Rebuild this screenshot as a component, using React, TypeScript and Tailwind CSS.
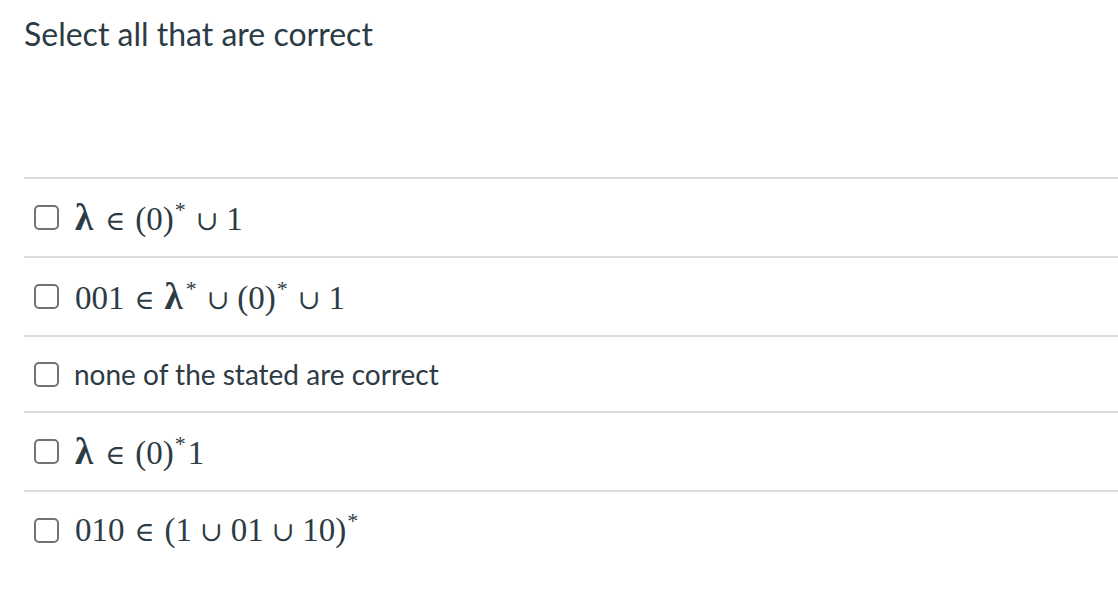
import React from "react";

const mathFont = { fontFamily: '"Liberation Serif", "DejaVu Serif", serif' };

const Sup = ({ children }: { children: React.ReactNode }) => (
  <sup className="relative -top-[13px] mr-[2px] ml-[1px] align-baseline text-[22px] leading-none">{children}</sup>
);

const Cup = () => <span className="mx-[8px] text-[27px]">∪</span>;
const In = () => <span className="mx-[10px] text-[27px]">∈</span>;
const Lambda = () => <span className="mr-[2px] text-[37px] leading-none font-bold">λ</span>;

interface Option {
  id: number;
  math: boolean;
  content: React.ReactNode;
}

const options: Option[] = [
  {
    id: 1,
    math: true,
    content: (
      <>
        <Lambda />
        <In />(0)<Sup>*</Sup>
        <Cup />1
      </>
    ),
  },
  {
    id: 2,
    math: true,
    content: (
      <>
        001<In />
        <Lambda />
        <Sup>*</Sup>
        <Cup />(0)<Sup>*</Sup>
        <Cup />1
      </>
    ),
  },
  { id: 3, math: false, content: "none of the stated are correct" },
  {
    id: 4,
    math: true,
    content: (
      <>
        <Lambda />
        <In />(0)<Sup>*</Sup>1
      </>
    ),
  },
  {
    id: 5,
    math: true,
    content: (
      <>
        010<In />(1<Cup />01<Cup />10)<Sup>*</Sup>
      </>
    ),
  },
];

export default function App() {
  return (
    <div
      className="min-h-[592px] bg-white pl-[24px] text-[#2d3b45]"
      style={{ fontFamily: 'Lato, "Open Sans", sans-serif' }}
    >
      <h1 className="pt-[12px] text-[32px] font-normal leading-[44px]">
        Select all that are correct
      </h1>

      <div className="mt-[121px]">
        {options.map((opt) => (
          <label
            key={opt.id}
            className={
              "flex items-center border-t-2 border-[#dcdcdc] pl-[10px] " +
              (opt.math ? "h-[79px]" : "h-[76px]")
            }
          >
            <span className="h-[25px] w-[25px] shrink-0 rounded-[5px] border-2 border-[#737373] bg-white" />
            {opt.math ? (
              <span className="ml-[16px] text-[33px] leading-none whitespace-nowrap" style={mathFont}>
                {opt.content}
              </span>
            ) : (
              <span className="ml-[15px] text-[28px] leading-none">{opt.content}</span>
            )}
          </label>
        ))}
      </div>
    </div>
  );
}
